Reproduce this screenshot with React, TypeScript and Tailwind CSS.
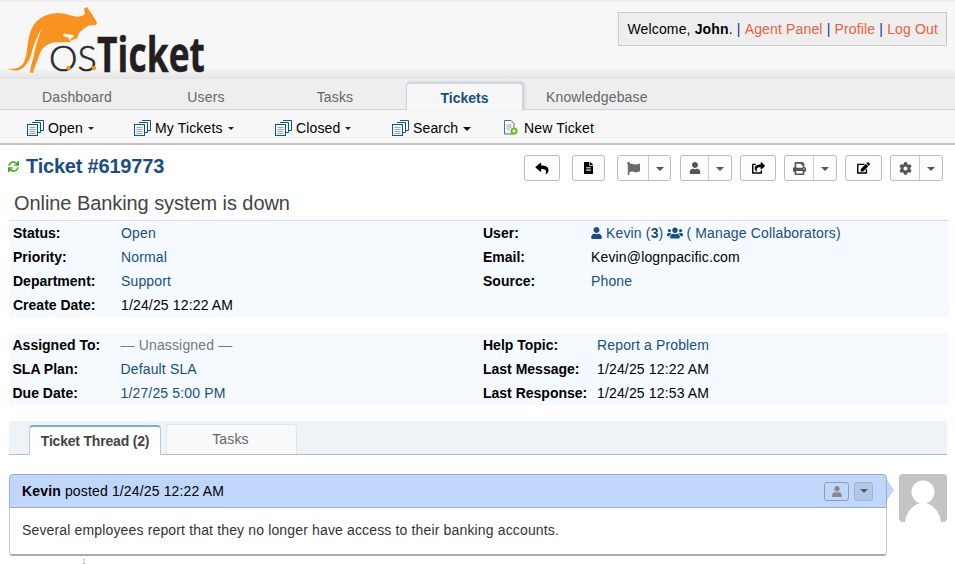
import React from "react";
import { FaReply, FaFileAlt, FaFlag, FaUser, FaShareSquare, FaPrint, FaEdit, FaCog, FaUsers, FaSync } from "react-icons/fa";

function Logo() {
  return (
    <svg width="215" height="78" viewBox="0 0 215 78" className="block -mt-[2px]">
      <path
        fill="#F7931E"
        d="M8 68.500C14 70 21 68 24 62C28 53 27 42 30 33C33 22 42 14 57 13C66 12.500 72 17 79 16.500C82 16 84 15 85 13.500L84 8.500L87 7L89 10C92 14 95 19 97 23L95.500 25L89 25.500C85 27 82 30 79 33L77.500 38L70 41L71 38.500L74 36.500L73 35L64 33.500L63 36L68 37.500L71 42C64 43 55 41 49 44C43 47 41 50 39 56C37 62 34 68 33 73L30 72.500C30 68 33 60 34 55C35 48 39 36 42 28C37 36 33 46 31 55C29 63 22 72 14 70.500C11 70 9 69.500 8 68.500Z"
      />
      <text x="49" y="71" fill="#2A2A2A" stroke="#2A2A2A" strokeWidth="0.6" fontSize="36" fontWeight="300" fontFamily="Lato, sans-serif" textLength="48" lengthAdjust="spacingAndGlyphs">OS</text>
      <circle cx="68.500" cy="68" r="2.200" fill="#F7931E" />
      <circle cx="94" cy="68" r="2.200" fill="#F7931E" />
      <text x="97" y="72" fill="#231F20" stroke="#231F20" strokeWidth="0.5" fontSize="49" fontWeight="700" fontFamily="'Open Sans', sans-serif" textLength="108" lengthAdjust="spacingAndGlyphs">Ticket</text>
    </svg>
  );
}

function Docs() {
  return (
    <svg width="17" height="16" viewBox="0 0 17 16" className="shrink-0">
      <path d="M8 .5h8.500v10H14" fill="#fff" stroke="#0a5a82" />
      <path d="M5 2.500h8.500v10H11" fill="#fff" stroke="#0a5a82" />
      <rect x=".5" y="4.500" width="10" height="11" fill="#f4f4f4" stroke="#0a5a82" />
      <path d="M2.500 7.500h6M2.500 9.500h6M2.500 11.500h6M2.500 13.500h6" stroke="#9aa7b0" />
    </svg>
  );
}

function NewDoc() {
  return (
    <svg width="15" height="15" viewBox="0 0 15 15" className="shrink-0">
      <path d="M1.500 .5h6.500l3 3v10.500h-9.500z" fill="#f6f8fa" stroke="#4f6f8c" />
      <path d="M3.500 5h5M3.500 7h5M3.500 9h3" stroke="#9aa7b0" />
      <circle cx="11" cy="11" r="3.500" fill="#7cb518" />
      <path d="M9.200 11h3.600M11 9.200v3.600" stroke="#fff" />
    </svg>
  );
}

function Caret({ big = false }: { big?: boolean }) {
  return (
    <span
      className={
        big
          ? "inline-block w-0 h-0 border-x-[4.500px] border-x-transparent border-t-[4.500px] border-t-[#111]"
          : "inline-block w-0 h-0 border-x-[3.500px] border-x-transparent border-t-[3.500px] border-t-[#222]"
      }
    />
  );
}

function SubItem({ label, w, big }: { label: string; w: string; big?: boolean }) {
  return (
    <div className={`flex items-center ${w}`}>
      <Docs />
      <span className="ml-[4px] text-black">{label}</span>
      <span className="ml-[5px] flex items-center mt-[2px]"><Caret big={big} /></span>
    </div>
  );
}

function Btn({ children, cls }: { children: React.ReactNode; cls: string }) {
  return (
    <div className={`h-[26px] rounded-[3px] border border-[#bbb] bg-[#fdfdfd] flex items-center justify-center text-[12px] text-black ${cls}`}>
      {children}
    </div>
  );
}

function SplitBtn({ children, cls, first }: { children: React.ReactNode; cls: string; first: string }) {
  return (
    <div className={`h-[26px] rounded-[3px] border border-[#bbb] bg-[#fdfdfd] flex items-center text-[12px] text-[#555] ${cls}`}>
      <div className={`h-full flex items-center justify-center border-r border-[#ccc] ${first}`}>{children}</div>
      <div className="flex-1 flex items-center justify-center mt-[2px]">
        <span className="inline-block w-0 h-0 border-x-[4px] border-x-transparent border-t-[4px] border-t-[#555]" />
      </div>
    </div>
  );
}

function Row({ a, b, c, d, w }: { a: string; b: React.ReactNode; c?: string; d?: React.ReactNode; w: string }) {
  return (
    <div className="flex h-[24px] items-center">
      <div className="w-[474px] flex pl-[4px]">
        <div className="w-[108px] font-bold text-black tracking-normal">{a}</div>
        <div>{b}</div>
      </div>
      <div className="flex">
        <div className={`${w} font-bold text-black tracking-normal`}>{c}</div>
        <div>{d}</div>
      </div>
    </div>
  );
}

const link = "text-[#184E81]";

export default function App() {
  return (
    <div className="w-[955px] h-[564px] overflow-hidden bg-white text-[14px] leading-[16px] tracking-[0.15px] text-black" style={{ fontFamily: "'Liberation Sans', Arial, sans-serif" }}>
      <header className="h-[79px] border-t-2 border-[#eeeeee] bg-gradient-to-b from-[#f7f7f7] from-[85%] to-[#e4e4e4] flex justify-between">
        <div><Logo /></div>
        <div className="mt-[10px] mr-[8px] h-[34px] border border-[#c8c8c8] bg-[#eeeeee] px-[8px] flex items-center">
          <span>Welcome, <b>John</b>.&nbsp;<span className="text-[#0a3d7c]">|</span>&nbsp;<span className="text-[#E8603C]">Agent Panel</span>&nbsp;<span className="text-[#0a3d7c]">|</span>&nbsp;<span className="text-[#E8603C]">Profile</span>&nbsp;<span className="text-[#0a3d7c]">|</span>&nbsp;<span className="text-[#E8603C]">Log Out</span></span>
        </div>
      </header>

      <nav className="h-[31px] bg-[#eeeeee] border-b border-[#c5d5e4] flex items-end text-[#666] relative">
        <div className="w-[154px] h-[30px] pt-[5px] flex items-center justify-center">Dashboard</div>
        <div className="w-[104px] h-[30px] pt-[5px] flex items-center justify-center">Users</div>
        <div className="w-[148px] h-[30px] pt-[5px] pl-[6px] flex items-center justify-center">Tasks</div>
        <div className="w-[117px] h-[27px] -mb-px pt-[1px] bg-[#f7f7f7] border border-b-0 border-[#c5d9ee] rounded-t-[4px] flex items-center justify-center font-bold text-[#184E81] tracking-normal shadow-[1px_-1px_3px_rgba(0,0,0,0.18)]">Tickets</div>
        <div className="ml-[23px] h-[30px] pt-[5px] flex items-center">Knowledgebase</div>
      </nav>

      <div className="h-[35px] pt-[2px] bg-[#f7f7f7] border-b-2 border-[#c3c3c3] flex items-center pl-[27px]">
        <SubItem label="Open" w="w-[107px]" />
        <SubItem label="My Tickets" w="w-[141px]" />
        <SubItem label="Closed" w="w-[117px]" />
        <SubItem label="Search" w="w-[111px]" big />
        <div className="flex items-center">
          <NewDoc />
          <span className="ml-[6px]">New Ticket</span>
        </div>
      </div>

      <div className="flex items-center justify-between h-[44px] pl-[8px] pr-[12px] pt-[2px]">
        <div className="flex items-center pb-[4px]">
          <FaSync className="text-[#3aa815] w-[11px] h-[11px]" />
          <span className="ml-[7px] text-[20px] leading-[24px] font-bold text-[#184E81] tracking-[-0.2px]">Ticket #619773</span>
        </div>
        <div className="flex">
          <Btn cls="w-[36px]"><FaReply className="w-[14px] h-[13px]" /></Btn>
          <Btn cls="w-[33px] ml-[12px]"><FaFileAlt className="w-[9px] h-[12px]" /></Btn>
          <SplitBtn cls="w-[54px] ml-[12px]" first="w-[31px]"><FaFlag className="w-[13px] h-[13px] text-[#6b6b6b]" /></SplitBtn>
          <SplitBtn cls="w-[52px] ml-[9px]" first="w-[28px]"><FaUser className="w-[12px] h-[12px]" /></SplitBtn>
          <Btn cls="w-[36px] ml-[8px]"><FaShareSquare className="w-[13px] h-[12px]" /></Btn>
          <SplitBtn cls="w-[53px] ml-[8px]" first="w-[29px]"><FaPrint className="w-[13px] h-[13px]" /></SplitBtn>
          <Btn cls="w-[37px] ml-[8px]"><FaEdit className="w-[13px] h-[12px]" /></Btn>
          <SplitBtn cls="w-[53px] ml-[8px]" first="w-[29px]"><FaCog className="w-[13px] h-[13px]" /></SplitBtn>
        </div>
      </div>

      <div className="pl-[14px] h-[31px] pb-[3px] flex items-center text-[20px] leading-[24px] text-[#444] tracking-[-0.07px]">Online Banking system is down</div>

      <section className="ml-[9px] mr-[6px] bg-[#F4FAFF] border-t border-[#d8dfe6] h-[97px]">
        <Row w="w-[108px]" a="Status:" b={<span className={link}>Open</span>} c="User:" d={
          <span className={`${link} flex items-center`}><FaUser className="w-[11px] h-[12px] mr-[4px]" />Kevin (<b>3</b>)<FaUsers className="w-[16px] h-[14px] ml-[4px] mr-[3px]" />( Manage Collaborators)</span>
        } />
        <Row w="w-[108px]" a="Priority:" b={<span className={link}>Normal</span>} c="Email:" d="Kevin@lognpacific.com" />
        <Row w="w-[108px]" a="Department:" b={<span className={link}>Support</span>} c="Source:" d={<span className={link}>Phone</span>} />
        <Row w="w-[108px]" a="Create Date:" b="1/24/25 12:22 AM" />
      </section>

      <section className="ml-[9px] mr-[6px] mt-[16px] bg-[#F4FAFF] h-[72px] [&>div>div:first-child]:pl-[3.500px]">
        <Row w="w-[114px]" a="Assigned To:" b={<span className="text-[#777]">— Unassigned —</span>} c="Help Topic:" d={<span className={link}>Report a Problem</span>} />
        <Row w="w-[114px]" a="SLA Plan:" b={<span className={link}>Default SLA</span>} c="Last Message:" d="1/24/25 12:22 AM" />
        <Row w="w-[114px]" a="Due Date:" b={<span className={link}>1/27/25 5:00 PM</span>} c="Last Response:" d="1/24/25 12:53 AM" />
      </section>

      <div className="ml-[9px] mr-[8px] mt-[16px] h-[34px] bg-[#eef3f8] border-b border-[#bbb] flex items-end pl-[20px]">
        <div className="w-[132px] h-[30px] -mb-px bg-white border border-b-0 border-[#bbc8d6] border-t-2 border-t-[#84a9d4] rounded-t-[4px] flex items-center justify-center font-bold text-[#444] tracking-[-0.2px]">Ticket Thread (2)</div>
        <div className="w-[131px] h-[30px] ml-[5px] pr-[2px] bg-[#f7f9fb] border border-b-0 border-[#dfe5ea] rounded-t-[4px] flex items-center justify-center text-[#666] pb-[1px]">Tasks</div>
      </div>

      <div className="ml-[9px] mt-[19px] flex">
        <div className="w-[878px]">
          <div className="relative h-[34px] bg-[#C0D6FB] border border-[#94aed0] rounded-t-[4px] flex items-center justify-between pl-[12px] pr-[13px]">
            <span><b>Kevin</b> posted 1/24/25 12:22 AM</span>
            <div className="flex items-center gap-[5px]">
              <div className="w-[25px] h-[19px] border border-[#8f9db0] rounded-[3px] flex items-center justify-center">
                <FaUser className="w-[10px] h-[11px] text-[#8a8a8a]" />
              </div>
              <div className="w-[19px] h-[19px] border border-[#9fb3cf] bg-[#b3c6e4] rounded-[3px] flex items-center justify-center">
                <span className="inline-block w-0 h-0 border-x-[4px] border-x-transparent border-t-[4px] border-t-[#4a5a78]" />
              </div>
            </div>
            <span className="absolute -right-[8px] top-[5px] w-0 h-0 border-y-[10px] border-y-transparent border-l-[7px] border-l-[#C0D6FB]" />
          </div>
          <div className="h-[48px] pb-[2px] bg-white border-x border-[#ccc] border-b-2 border-b-[#aaa] rounded-b-[4px] flex items-center pl-[12px] text-[#333]">
            Several employees report that they no longer have access to their banking accounts.
          </div>
          <div className="ml-[74px] mt-[3px] h-[8px] w-px border-l-2 border-dotted border-[#ccc]" />
        </div>
        <div className="ml-[12px] w-[48px] h-[48px] bg-[#c4c4c4] rounded-[4px] overflow-hidden">
          <svg viewBox="0 0 48 48" width="48" height="48">
            <circle cx="24" cy="18" r="11.500" fill="#fff" />
            <path d="M6 48C7 38 13 32 21 29H27C35 32 41 38 42 48Z" fill="#fff" />
          </svg>
        </div>
      </div>
    </div>
  );
}
